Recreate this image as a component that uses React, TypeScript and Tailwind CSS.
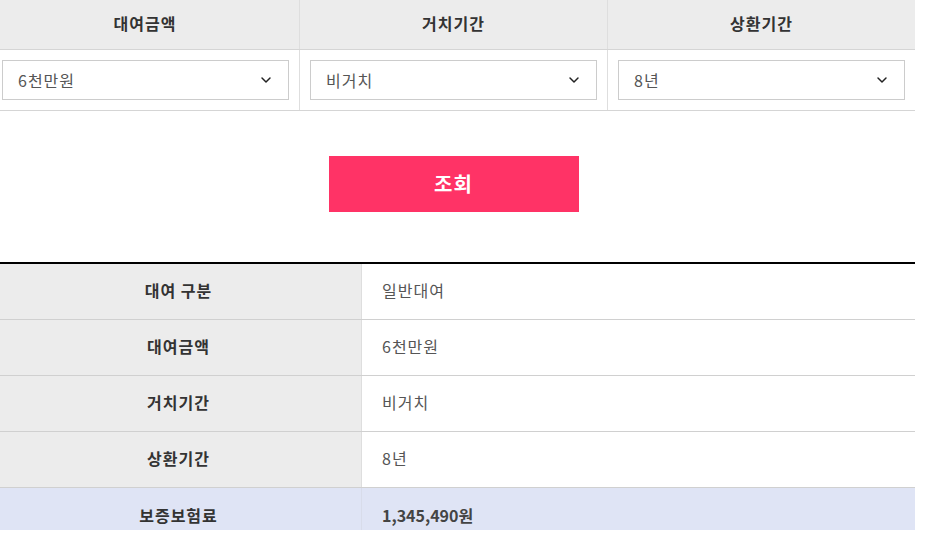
import { ChevronDown } from "lucide-react";

const FILTERS = [
  { label: "대여금액", value: "6천만원" },
  { label: "거치기간", value: "비거치" },
  { label: "상환기간", value: "8년" },
];

const RESULT = [
  { label: "대여 구분", value: "일반대여" },
  { label: "대여금액", value: "6천만원" },
  { label: "거치기간", value: "비거치" },
  { label: "상환기간", value: "8년" },
];

const App = () => {
  return (
    <div className="h-[530px] w-[928px] overflow-hidden bg-white font-['Noto_Sans_CJK_KR',sans-serif] text-[16px] tracking-[1px]">
      <div className="w-[915px]">
        {/* filter table — the first column is cut off on the left */}
        <div className="-ml-[9px] w-[924px] border-b border-[#d5d5d5]">
          <div className="grid grid-cols-3 border-b border-[#d5d5d5] bg-[#ececec]">
            {FILTERS.map((f, i) => (
              <div
                key={f.label}
                className={`flex h-[49px] items-center justify-center pb-[3px] font-bold text-[#333] ${i > 0 ? "border-l border-[#dedede]" : ""}`}
              >
                {f.label}
              </div>
            ))}
          </div>
          <div className="grid grid-cols-3">
            {FILTERS.map((f, i) => (
              <div
                key={f.label}
                className={`h-[60px] py-[10px] pr-[10px] ${i > 0 ? "border-l border-[#dedede] pl-[10px]" : "pl-[11px]"}`}
              >
                <div className="flex h-[40px] items-center justify-between border border-[#cccccc] pr-[14px] pb-[1px] pl-[15px] text-[#555]">
                  <span>{f.value}</span>
                  <ChevronDown size={16} strokeWidth={2.2} className="text-[#222]" />
                </div>
              </div>
            ))}
          </div>
        </div>

        <div className="flex justify-center pt-[45px] pr-[8px] pb-[50px]">
          <button
            type="button"
            className="h-[56px] w-[250px] bg-[#ff3366] text-[20px] font-bold tracking-[1px] text-white"
          >
            조회
          </button>
        </div>

        {/* result table */}
        <div className="border-t-2 border-black">
          {RESULT.map((r) => (
            <div key={r.label} className="flex h-[56px] border-b border-[#d0d0d0]">
              <div className="flex w-[362px] items-center justify-center border-r border-[#dedede] bg-[#ececec] pr-[4px] pb-[3px] font-bold text-[#333]">
                {r.label}
              </div>
              <div className="flex flex-1 items-center pb-[3px] pl-[20px] text-[#555]">{r.value}</div>
            </div>
          ))}
          <div className="flex h-[56px] bg-[#dfe4f5]">
            <div className="flex w-[362px] items-center justify-center border-r border-[#d8dcea] pr-[4px] pb-[3px] font-bold text-[#333]">
              보증보험료
            </div>
            <div className="flex flex-1 items-center pb-[3px] pl-[20px] font-bold tracking-normal text-[#444]">1,345,490원</div>
          </div>
        </div>
      </div>
    </div>
  );
};

export default App;
